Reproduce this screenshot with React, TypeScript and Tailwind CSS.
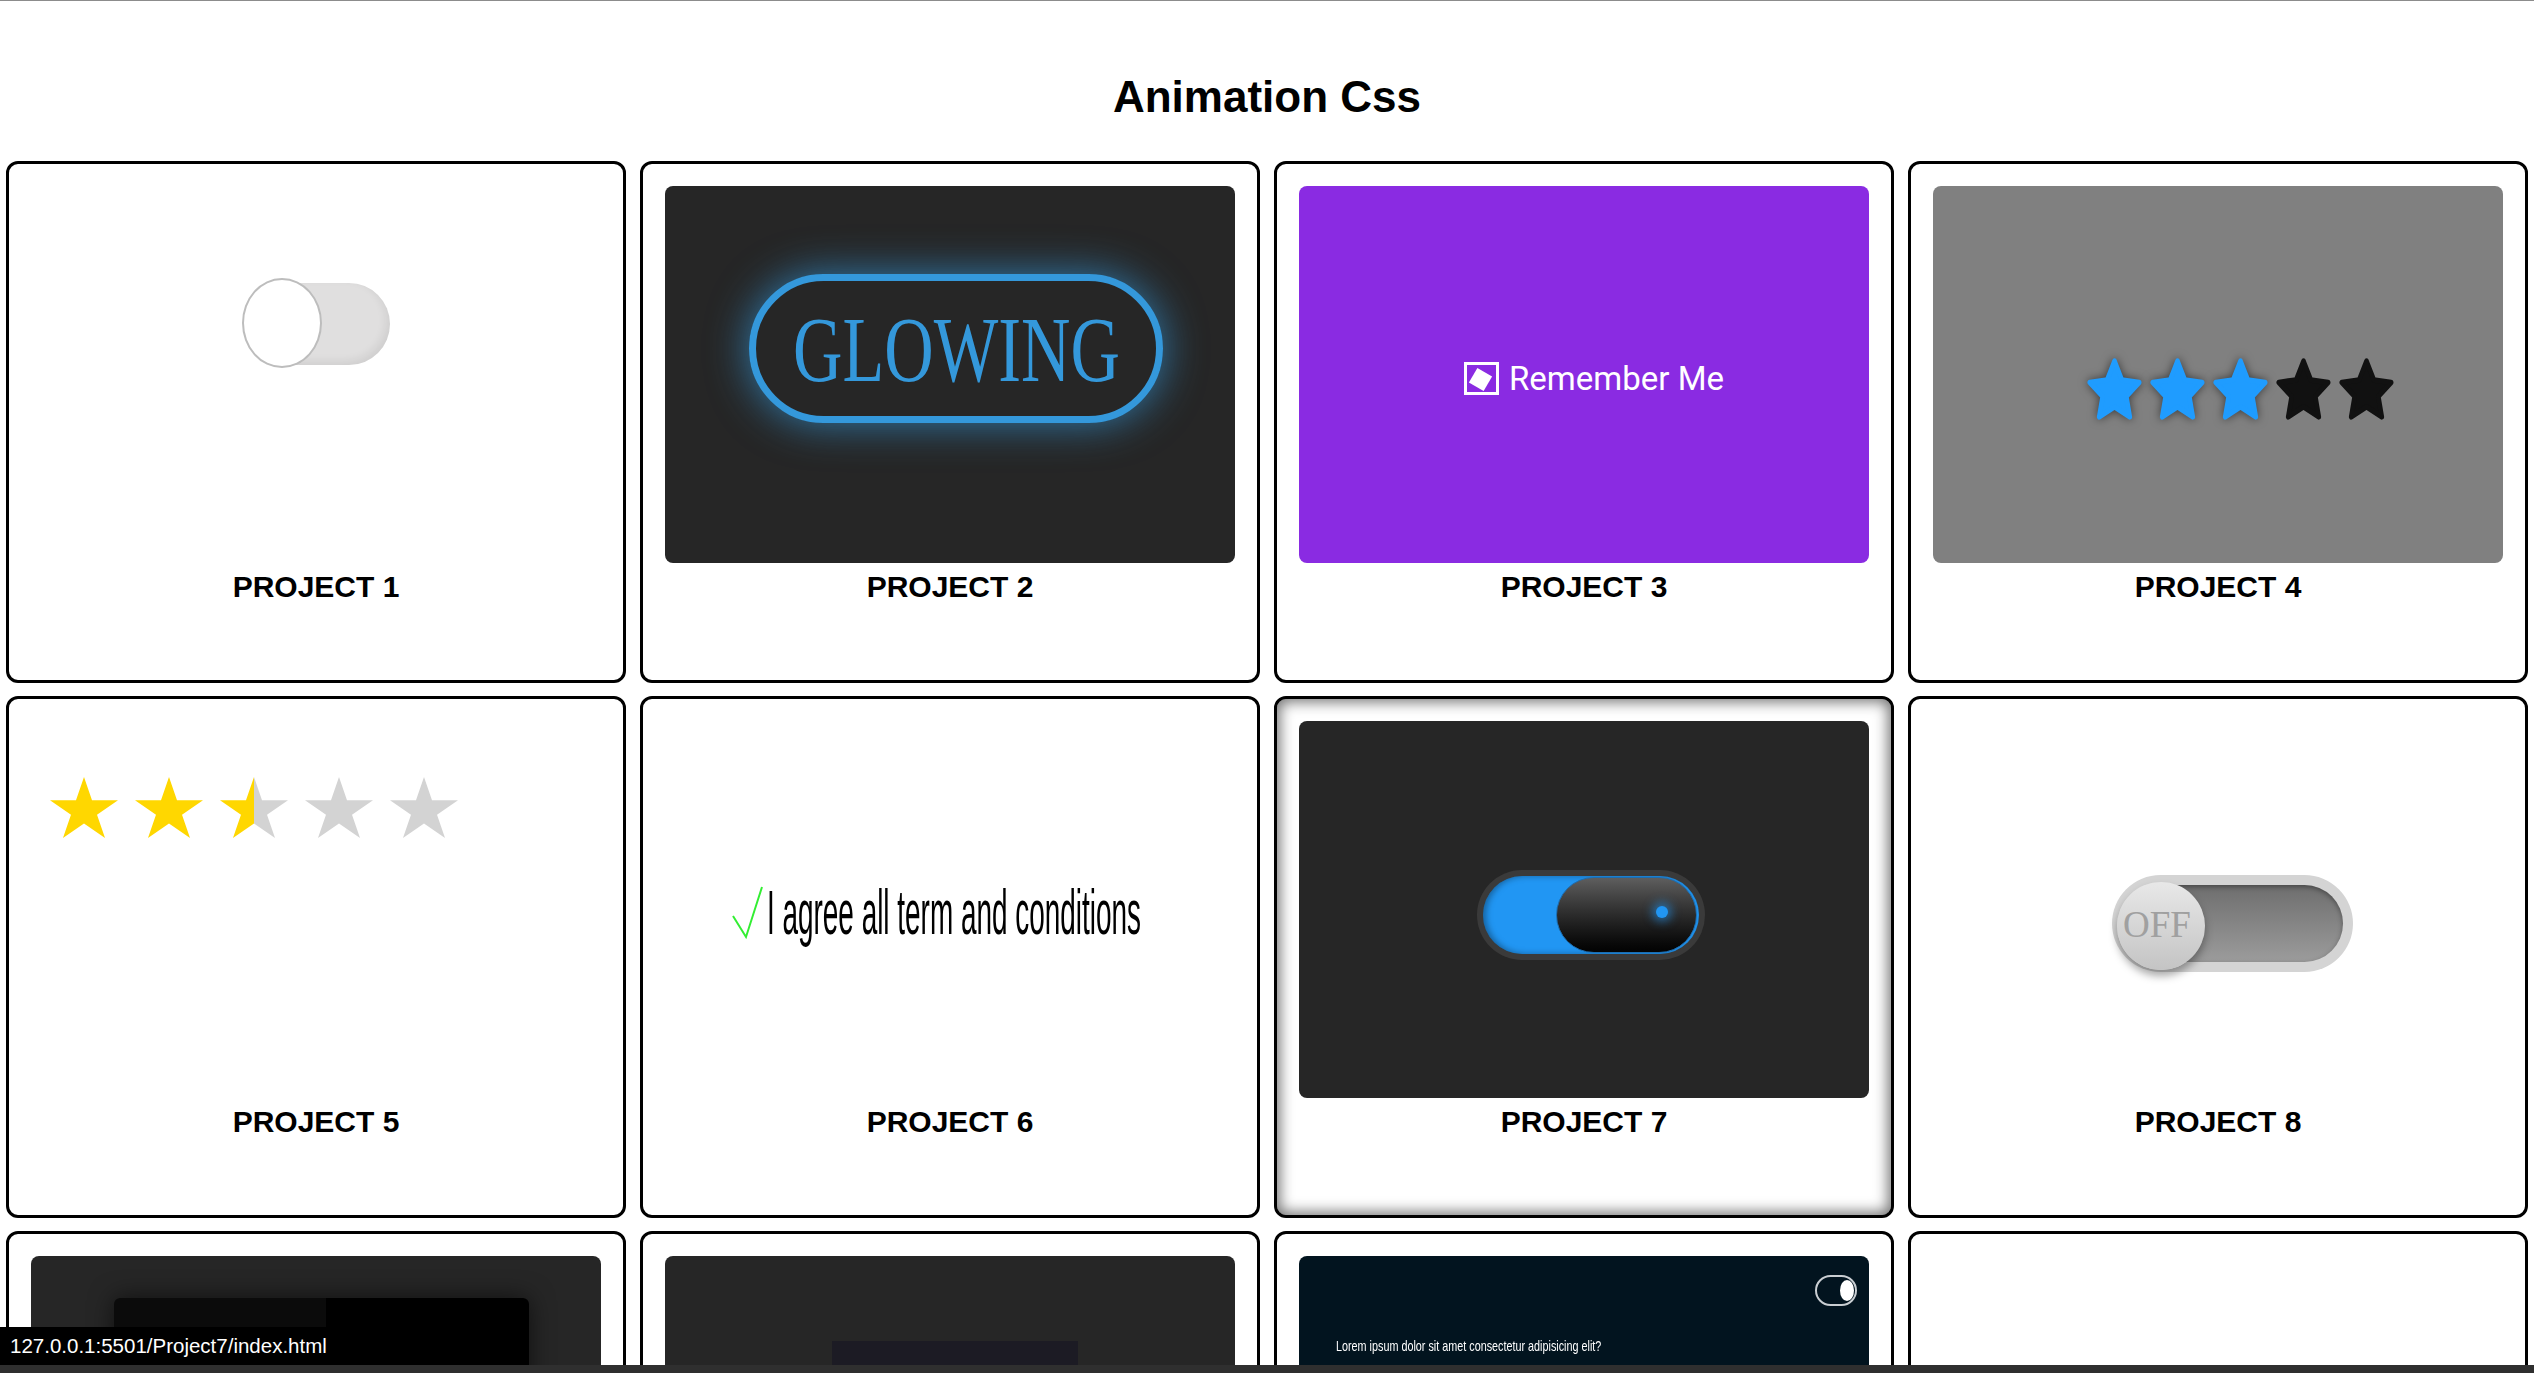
import type { ReactNode } from "react";

const STAR_SHARP =
  "50,0 61.2,34.5 97.55,34.55 68.2,55.9 79.4,90.45 50,69.1 20.6,90.45 31.8,55.9 2.45,34.55 38.8,34.5";
const STAR_FAT =
  "50,0 64.1,30.6 97.55,34.55 72.8,57.4 79.4,90.45 50,74 20.6,90.45 27.2,57.4 2.45,34.55 35.9,30.6";

function Card({
  n,
  bg,
  className = "",
  shadow = false,
  children,
}: {
  n: number;
  bg: string;
  className?: string;
  shadow?: boolean;
  children?: ReactNode;
}) {
  return (
    <div
      className={`h-[522px] rounded-[12px] border-[3px] border-black bg-white p-[22px] flex flex-col ${
        shadow ? "shadow-[inset_0_0_14px_3px_rgba(0,0,0,0.55)]" : ""
      }`}
    >
      <div className={`h-[377px] shrink-0 rounded-[8px] overflow-hidden ${bg} ${className}`}>
        {children}
      </div>
      <div className="mt-[6px] text-center text-[30px] leading-[35px] font-bold text-black">
        PROJECT {n}
      </div>
    </div>
  );
}

function PlainToggle() {
  return (
    <div className="relative w-[148px] h-[90px]">
      <div className="absolute left-[8px] top-[5px] w-[140px] h-[82px] rounded-full bg-[#e0dfdf] shadow-[inset_-4px_-4px_8px_rgba(0,0,0,0.07)]" />
      <div className="absolute left-0 top-0 w-[80px] h-[90px] rounded-[50%] bg-white border-2 border-[#bdbdbd]" />
    </div>
  );
}

function Glowing() {
  return (
    <div className="flex items-center justify-center w-[414px] h-[149px] rounded-full border-[7px] border-[#3498db] shadow-[0_0_42px_rgba(52,152,219,0.75)]">
      <div className="w-[327px] h-[94px]">
        <span className="block whitespace-nowrap origin-left scale-x-[0.728] text-[94px] leading-none text-[#3498db] font-['Liberation_Serif','Times_New_Roman',serif]">
          GLOWING
        </span>
      </div>
    </div>
  );
}

function RememberMe() {
  return (
    <div className="flex items-center gap-[10px]">
      <div className="w-[35px] h-[33px] border-[3px] border-white flex items-center justify-center">
        <div className="w-[17px] h-[17px] bg-white rotate-[30deg] -translate-x-[1px] translate-y-[1px]" />
      </div>
      <span className="text-white text-[33px] leading-none font-['Roboto',sans-serif]">
        Remember Me
      </span>
    </div>
  );
}

function RoundStar({ color, glow }: { color: string; glow: boolean }) {
  return (
    <svg
      viewBox="-3 -5 106 100.5"
      preserveAspectRatio="none"
      className={`w-[55px] h-[62px] ${glow ? "drop-shadow-[0_0_5px_rgba(0,0,0,0.55)]" : ""}`}
    >
      <polygon points={STAR_FAT} fill={color} stroke={color} strokeWidth="9" strokeLinejoin="round" />
    </svg>
  );
}

function SharpStar({ fill }: { fill: string }) {
  return (
    <svg viewBox="2.45 0 95.1 90.45" preserveAspectRatio="none" className="w-[68px] h-[61px]">
      <defs>
        <linearGradient id="halfStar" x1="0" x2="1" y1="0" y2="0">
          <stop offset="50%" stopColor="#ffd700" />
          <stop offset="50%" stopColor="#d3d3d3" />
        </linearGradient>
      </defs>
      <polygon points={STAR_SHARP} fill={fill} />
    </svg>
  );
}

function AgreeText() {
  return (
    <div className="flex items-center gap-[3px]">
      <svg viewBox="0 0 32 54" className="w-[32px] h-[54px]">
        <polyline
          points="1,30 14,51 30,1"
          fill="none"
          stroke="#33ee33"
          strokeWidth="2"
          strokeLinejoin="miter"
        />
      </svg>
      <div className="w-[374px] h-[63px]">
        <span className="block whitespace-nowrap origin-left scale-x-[0.443] text-[63px] leading-none text-black">
          I agree all term and conditions
        </span>
      </div>
    </div>
  );
}

function BlueToggle() {
  return (
    <div className="w-[228px] h-[90px] rounded-full bg-[#3a3a3a] p-[6px]">
      <div className="relative h-full rounded-full bg-[#2196f3] shadow-[inset_3px_0_6px_rgba(0,0,0,0.35)]">
        <div className="absolute right-[2px] top-[1px] w-[141px] h-[76px] rounded-full bg-linear-to-b from-[#5e5e5e] to-[#030303] border border-[#1d6db0]">
          <div className="absolute left-[99px] top-[28px] w-[12px] h-[12px] rounded-full bg-[#2196f3] shadow-[0_0_10px_4px_rgba(33,150,243,0.55)]" />
        </div>
      </div>
    </div>
  );
}

function OffToggle() {
  return (
    <div className="relative w-[241px] h-[97px] rounded-full bg-[#d4d4d4] p-[10px]">
      <div className="h-full w-full rounded-full bg-linear-to-b from-[#6e6e6e] to-[#9c9c9c] shadow-[inset_0_2px_5px_rgba(0,0,0,0.35)]" />
      <div className="absolute left-[5px] top-[7px] w-[88px] h-[88px] rounded-full bg-linear-to-b from-[#e8e8e8] to-[#c4c4c4] shadow-[0_6px_8px_rgba(0,0,0,0.35)] flex items-center justify-center">
        <span className="text-[37px] leading-none text-[#a0a0a0] font-['Liberation_Serif',serif] -translate-x-[4px] -translate-y-[2px]">
          OFF
        </span>
      </div>
    </div>
  );
}

export default function App() {
  return (
    <div className="h-screen overflow-hidden bg-white font-['Liberation_Sans',Arial,sans-serif]">
      <div className="h-[1px] bg-[#8c8c8c]" />
      <h1 className="pt-[70px] pb-[39px] text-center text-[44px] leading-[51px] font-bold text-black">
        Animation Css
      </h1>

      <div className="grid grid-cols-4 gap-x-[14px] gap-y-[13px] px-[6px]">
        <Card n={1} bg="bg-white" className="flex justify-center pt-[92px]">
          <PlainToggle />
        </Card>

        <Card n={2} bg="bg-[#262626]" className="flex justify-center pt-[88px] pl-[12px]">
          <Glowing />
        </Card>

        <Card n={3} bg="bg-[#8a2be2]" className="flex items-center justify-center pl-[20px] pt-[7px]">
          <RememberMe />
        </Card>

        <Card n={4} bg="bg-[#808080]" className="flex items-center justify-center gap-[8px] pl-[44px] pt-[28px]">
          {[0, 1, 2, 3, 4].map((i) => (
            <RoundStar key={i} color={i < 3 ? "#1f9cff" : "#111111"} glow={i < 3} />
          ))}
        </Card>

        <Card n={5} bg="bg-white" className="flex items-start gap-[17px] pl-[19px] pt-[56px]">
          <SharpStar fill="#ffd700" />
          <SharpStar fill="#ffd700" />
          <SharpStar fill="url(#halfStar)" />
          <SharpStar fill="#d3d3d3" />
          <SharpStar fill="#d3d3d3" />
        </Card>

        <Card n={6} bg="bg-white" className="flex items-center justify-center pr-[28px] pt-[6px]">
          <AgreeText />
        </Card>

        <Card n={7} bg="bg-[#262626]" shadow className="flex items-center justify-center pl-[14px] pt-[11px]">
          <BlueToggle />
        </Card>

        <Card n={8} bg="bg-white" className="flex items-center justify-center pl-[29px] pt-[28px]">
          <OffToggle />
        </Card>

        <Card n={9} bg="bg-[#262626]" className="pt-[42px] pl-[83px]">
          <div className="flex w-[415px] h-[160px] rounded-[6px] overflow-hidden shadow-[0_0_25px_rgba(0,0,0,0.6)]">
            <div className="w-[212px] bg-[#0b0b0b]" />
            <div className="flex-1 bg-black" />
          </div>
        </Card>

        <Card n={10} bg="bg-[#262626]" className="pt-[85px] pl-[167px]">
          <div className="w-[246px] h-[100px] bg-[#1c1b24]" />
        </Card>

        <Card n={11} bg="bg-[#02141f]" className="flex flex-col">
          <div className="flex justify-end pt-[19px] pr-[12px]">
            <div className="w-[42px] h-[31px] rounded-full border-2 border-[#c9ced2] flex items-center justify-end pr-[1px]">
              <div className="w-[14px] h-[21px] rounded-[50%] bg-white" />
            </div>
          </div>
          <div className="mt-[32px] ml-[37px] w-[266px]">
            <span className="block whitespace-nowrap origin-left scale-x-[0.72] text-[15px] leading-none text-white">
              Lorem ipsum dolor sit amet consectetur adipisicing elit?
            </span>
          </div>
        </Card>

        <Card n={12} bg="bg-white" />
      </div>

      {/* browser status bubble */}
      <div className="fixed left-0 bottom-[8px] h-[38px] w-[345px] bg-black rounded-tr-[4px] flex items-center pl-[10px] text-white text-[20.5px] leading-none">
        127.0.0.1:5501/Project7/index.html
      </div>
      <div className="fixed left-0 right-0 bottom-0 h-[8px] bg-[#2f2f2f]" />
    </div>
  );
}
